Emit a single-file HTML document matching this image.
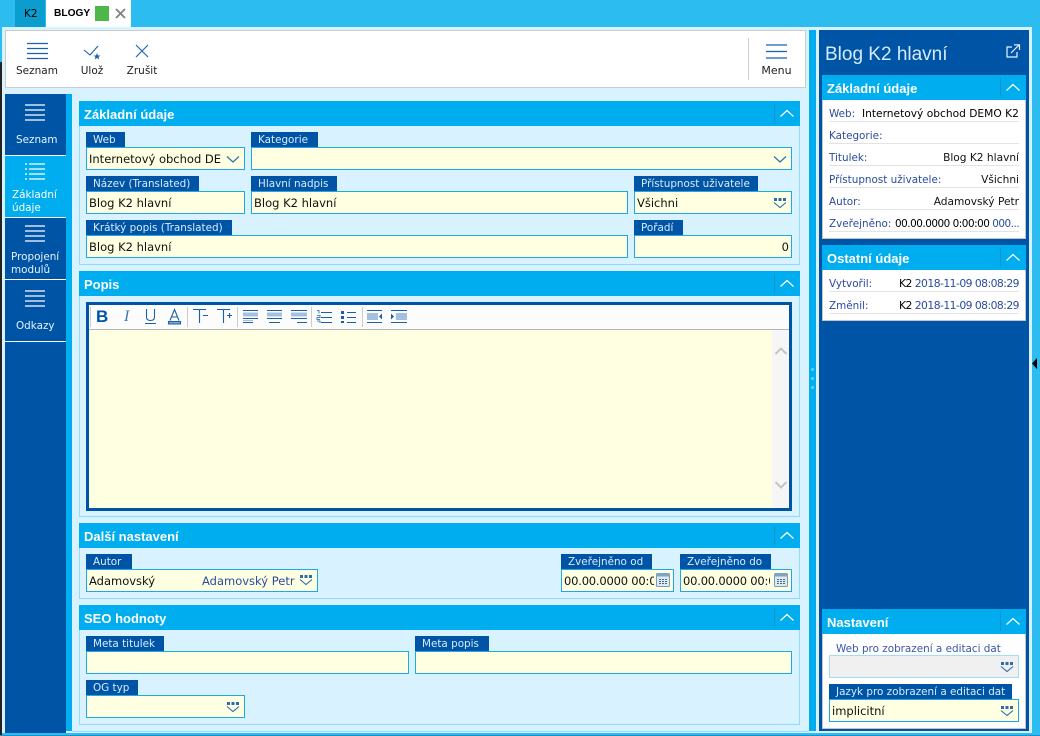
<!DOCTYPE html>
<html><head><meta charset="utf-8"><style>
html,body{margin:0;padding:0}
body{width:1040px;height:736px;overflow:hidden;position:relative;background:#2dbcef;font-family:"DejaVu Sans",sans-serif;font-size:11px;color:#000}
div,span,svg{position:absolute;box-sizing:border-box}
.t{white-space:nowrap;line-height:16px}
.h{background:#00aeef;color:#fff;font:bold 13px/27px "Liberation Sans",sans-serif;height:25px;padding-left:5px}
.h:before{content:"";position:absolute;right:25px;top:3px;bottom:3px;width:1px;background:#1a8fc8}
.h svg{right:5px;top:7px}
.b{background:#d9f2ff;border:1px solid #8fdcff;border-top:0}
.l{background:#0054a6;color:#d8ecfb;height:15px;line-height:17px;padding-left:7px;white-space:nowrap;font-size:10.4px;overflow:hidden}
.i{background:#ffffe1;border:1px solid #1ba9e8;height:23px;line-height:22px;padding-left:2px;white-space:nowrap;overflow:hidden;font-size:11.5px;color:#111}
.n{left:5px;width:61px;height:61px;background:#0054a6;color:#e6f3fc;border-bottom:1px solid #fff;font-size:10.4px}
.n .t{line-height:13px}
.n svg{left:20px}
.r{left:829px;width:190px;height:1px;background:#e3e3e3}
.k{left:829px;color:#2b4ba0;font-size:10.4px}
.v{right:21px;color:#111;font-size:10.6px;text-align:right}
.tb{top:63px;color:#222;font-size:10.5px;text-align:center}
.num{letter-spacing:-.55px;font-size:10.8px}
</style></head><body>
<svg width="0" height="0" style="position:absolute"><defs>
<symbol id="up" viewBox="0 0 16 10"><path d="M1.500 8.500 8 2.500l6.500 6" fill="none" stroke="#fff" stroke-width="1.200"/></symbol>
<symbol id="dn" viewBox="0 0 16 10"><path d="M2 2.500 8 8l6-5.500" fill="none" stroke="#2a73b5" stroke-width="1.200"/></symbol>
<symbol id="dd" viewBox="0 0 14 12"><path d="M1 1h3v3H1zM5.500 1h3v3h-3zM10 1h3v3h-3z" fill="#2a6cb0"/><path d="M1 5.500 7 10.500l6-5" fill="none" stroke="#2a6cb0" stroke-width="1.100"/></symbol>
<symbol id="nv" viewBox="0 0 20 17"><path d="M0 1h20M0 6h20M0 11h20M0 16h20" stroke="#fff" stroke-width="1.300"/></symbol>
<symbol id="cal" viewBox="0 0 14 14"><rect x=".5" y=".5" width="13" height="13" rx="1" fill="#dfe9f2" stroke="#7a9cbc"/><rect x=".5" y=".5" width="13" height="3" fill="#7ea4c8"/><path d="M3 6h2v1H3zM6 6h2v1H6zM9 6h2v1H9zM3 8h2v1H3zM6 8h2v1H6zM9 8h2v1H9zM3 10h2v1H3zM6 10h2v1H6zM9 10h2v1H9z" fill="#44688c"/></symbol>
</defs></svg>

<!-- tabs -->
<div style="left:0;top:62px;width:2px;height:674px;background:#222"></div>
<div style="left:15px;top:0;width:30px;height:27px;background:#0a9dcd"></div>
<div class="t" style="left:24px;top:6px;font-size:10.500px">K2</div>
<div style="left:46px;top:0;width:85px;height:27px;background:#fff"></div>
<div class="t" style="left:54px;top:6px;font:bold 10.200px/16px 'Liberation Sans',sans-serif">BLOGY</div>
<div style="left:95px;top:6px;width:14px;height:15px;background:#4db848"></div>
<svg style="left:115px;top:8px" width="11" height="11"><path d="M1 1l9 9M10 1l-9 9" stroke="#808080" stroke-width="1.800"/></svg>

<!-- main area -->
<div style="left:2px;top:27px;width:1030px;height:706px;background:#d9f2ff"></div>
<div style="left:5px;top:30px;width:801px;height:58px;background:#fff;border:1px solid #ccc"></div>

<!-- toolbar -->
<svg style="left:27px;top:42px" width="21" height="18"><path d="M0 1.500h21M0 6.500h21M0 11.500h21M0 16.500h21" stroke="#1b62ad" stroke-width="1.300"/></svg>
<div class="t tb" style="left:7px;width:60px">Seznam</div>
<svg style="left:83px;top:44px" width="18" height="16"><path d="M1 6l6 5 8-9" fill="none" stroke="#1b62ad" stroke-width="1.100"/><path d="M14 9l1 2.500h2.500l-2 1.500.8 2.500-2.300-1.500-2.300 1.500.8-2.500-2-1.500H13z" fill="#1b62ad"/></svg>
<div class="t tb" style="left:72px;width:40px">Ulož</div>
<svg style="left:135px;top:44px" width="14" height="14"><path d="M1 1l12 12M13 1L1 13" stroke="#1b62ad" stroke-width="1.100"/></svg>
<div class="t tb" style="left:122px;width:40px">Zrušit</div>
<div style="left:748px;top:38px;width:1px;height:42px;background:#ccc"></div>
<svg style="left:766px;top:44px" width="21" height="15"><path d="M0 1h21M0 7.500h21M0 14h21" stroke="#1b62ad" stroke-width="1.300"/></svg>
<div class="t tb" style="left:756px;width:41px;font-size:11px">Menu</div>

<!-- left nav -->
<div style="left:5px;top:94px;width:61px;height:639px;background:#0054a6"></div>
<div style="left:66px;top:94px;width:6px;height:637px;background:#00aeef"></div>
<div class="n" style="top:94px;height:62px"><svg style="top:10px" width="20" height="17"><use href="#nv"/></svg><div class="t" style="left:11px;top:40px">Seznam</div></div>
<div class="n" style="top:156px;background:#00aeef;height:62px;color:#fff"><svg style="top:7px" width="20" height="17"><path d="M0 1h2M0 6h2M0 11h2M0 16h2M4 1h16M4 6h16M4 11h16M4 16h16" stroke="#fff" stroke-width="1.300"/></svg><div class="t" style="left:7px;top:33px">Základní<br>údaje</div></div>
<div class="n" style="top:218px;height:62px"><svg style="top:7px" width="20" height="17"><use href="#nv"/></svg><div class="t" style="left:6px;top:33px">Propojení<br>modulů</div></div>
<div class="n" style="top:280px;height:62px"><svg style="top:10px" width="20" height="17"><use href="#nv"/></svg><div class="t" style="left:11px;top:40px">Odkazy</div></div>

<!-- Section 1 -->
<div class="b" style="left:79px;top:101px;width:721px;height:164px"></div>
<div class="h" style="left:79px;top:101px;width:721px">Základní údaje<svg width="16" height="10"><use href="#up"/></svg></div>
<div class="l" style="left:86px;top:132px;width:39px">Web</div>
<div class="i" style="left:86px;top:147px;width:159px">Internetový obchod DE<svg style="right:3px;top:6px" width="16" height="10"><use href="#dn"/></svg></div>
<div class="l" style="left:251px;top:132px;width:67px">Kategorie</div>
<div class="i" style="left:251px;top:147px;width:541px"><svg style="right:3px;top:6px" width="16" height="10"><use href="#dn"/></svg></div>
<div class="l" style="left:86px;top:176px;width:113px">Název (Translated)</div>
<div class="i" style="left:86px;top:191px;width:159px">Blog K2 hlavní</div>
<div class="l" style="left:251px;top:176px;width:86px">Hlavní nadpis</div>
<div class="i" style="left:251px;top:191px;width:377px">Blog K2 hlavní</div>
<div class="l" style="left:634px;top:176px;width:124px">Přístupnost uživatele</div>
<div class="i" style="left:634px;top:191px;width:158px">Všichni<svg style="right:4px;top:5px" width="14" height="12"><use href="#dd"/></svg></div>
<div class="l" style="left:86px;top:220px;width:146px">Krátký popis (Translated)</div>
<div class="i" style="left:86px;top:235px;width:542px">Blog K2 hlavní</div>
<div class="l" style="left:634px;top:220px;width:49px">Pořadí</div>
<div class="i" style="left:634px;top:235px;width:158px;text-align:right;padding-right:2px">0</div>

<!-- Section 2 -->
<div class="b" style="left:79px;top:271px;width:721px;height:246px"></div>
<div class="h" style="left:79px;top:271px;width:721px">Popis<svg width="16" height="10"><use href="#up"/></svg></div>
<div style="left:86px;top:302px;width:706px;height:209px;border:3px solid #0054a6;background:#ffffe1"></div>
<div style="left:89px;top:305px;width:700px;height:25px;background:#fcfcfc;border-bottom:1px solid #b5b5b5"></div>
<div style="left:772px;top:330px;width:17px;height:178px;background:#f6f6f6"></div>
<svg style="left:774px;top:346px" width="14" height="10"><path d="M1.500 8 7 2.500 12.500 8" fill="none" stroke="#c4c4c4" stroke-width="2"/></svg>
<svg style="left:774px;top:480px" width="14" height="10"><path d="M1.500 2 7 7.500 12.500 2" fill="none" stroke="#c4c4c4" stroke-width="2"/></svg>
<!-- editor toolbar -->
<div style="left:90px;top:307px;width:1px;height:20px;background:#ccc"></div>
<div style="left:187px;top:307px;width:1px;height:20px;background:#ccc"></div>
<div style="left:237px;top:307px;width:1px;height:20px;background:#ccc"></div>
<div style="left:311px;top:307px;width:1px;height:20px;background:#ccc"></div>
<div style="left:362px;top:307px;width:1px;height:20px;background:#ccc"></div>
<div class="t" style="left:96px;top:307px;font:bold 17px/19px 'Liberation Sans',sans-serif;color:#0054a6">B</div>
<div class="t" style="left:124px;top:308px;font:italic 16px/18px 'Liberation Serif',serif;color:#3a78b8">I</div>
<svg style="left:145px;top:308px" width="170" height="18" fill="none" stroke="#1b5fa8" stroke-width="1.100">
<path d="M1.500 1v8q0 3.500 4 3.500t4-3.500V1M0 15.500h11"/>
<path d="M25 12.500 29.500 1.500l4.500 11M26.500 9h6"/><path d="M23.500 13.500h12v2.500h-12z" fill="#7ea6d0"/>
<path d="M48 1.500h13M54.500 1.500V15M58 7.500h5"/>
<path d="M72 1.500h13M78.500 1.500V15M82 7.500h5M84.500 5v5"/>
</svg>
<svg style="left:243px;top:310px" width="170" height="13" fill="none" stroke="#1b5fa8">
<path d="M0 .5h15M0 8.500h15M0 12.500h10"/><path d="M0 2.500h15v4H0z" stroke="none" fill="#a4c0de"/><path d="M0 10.500h10" stroke="#a4c0de"/>
<path d="M24 .5h15M24 8.500h15M26 12.500h11"/><path d="M24 2.500h15v4H24z" stroke="none" fill="#a4c0de"/>
<path d="M48 .5h16M48 8.500h16M54 12.500h10"/><path d="M48 2.500h16v4H48z" stroke="none" fill="#a4c0de"/>
<path d="M78 2.500h11M78 7.500h11M78 12.500h11"/><path d="M74 .5h2v3M74 5.500h3v2h-3v2h3M74 11h3v3h-3" stroke-width=".8"/>
<path d="M104 2.500h9M104 7.500h9M104 12.500h9" stroke-width="1.100"/><path d="M98 1h3v3h-3zM98 6h3v3h-3zM98 11h3v3h-3z" fill="#1b5fa8" stroke="none"/>
<path d="M124 .5h15M124 12.500h15"/><path d="M124 3h11v7h-11z" stroke="none" fill="#a4c0de"/><path d="M139 3.500v6l-3-3z" fill="#1b5fa8" stroke="none"/>
<path d="M148 .5h16M148 12.500h16"/><path d="M153 3h11v7h-11z" stroke="none" fill="#a4c0de"/><path d="M148 3.500v6l3-3z" fill="#1b5fa8" stroke="none"/>
</svg>

<!-- Section 3 -->
<div class="b" style="left:79px;top:523px;width:721px;height:76px"></div>
<div class="h" style="left:79px;top:523px;width:721px">Další nastavení<svg width="16" height="10"><use href="#up"/></svg></div>
<div class="l" style="left:86px;top:554px;width:46px">Autor</div>
<div class="i" style="left:86px;top:569px;width:232px">Adamovský<span style="left:115px;top:0;color:#2b4ba0">Adamovský Petr</span><svg style="right:4px;top:4px" width="14" height="12"><use href="#dd"/></svg></div>
<div class="l" style="left:561px;top:554px;width:91px">Zveřejněno od</div>
<div class="i" style="left:561px;top:569px;width:113px"><span style="left:2px;top:0;width:90px;overflow:hidden;letter-spacing:-.2px">00.00.0000 00:00</span><svg style="right:3px;top:3px" width="14" height="14"><use href="#cal"/></svg></div>
<div class="l" style="left:680px;top:554px;width:91px">Zveřejněno do</div>
<div class="i" style="left:680px;top:569px;width:112px"><span style="left:2px;top:0;width:87px;overflow:hidden;letter-spacing:-.2px">00.00.0000 00:00</span><svg style="right:3px;top:3px" width="14" height="14"><use href="#cal"/></svg></div>

<!-- Section 4 -->
<div class="b" style="left:79px;top:605px;width:721px;height:120px"></div>
<div class="h" style="left:79px;top:605px;width:721px">SEO hodnoty<svg width="16" height="10"><use href="#up"/></svg></div>
<div class="l" style="left:86px;top:636px;width:78px">Meta titulek</div>
<div class="i" style="left:86px;top:651px;width:323px"></div>
<div class="l" style="left:415px;top:636px;width:74px">Meta popis</div>
<div class="i" style="left:415px;top:651px;width:377px"></div>
<div class="l" style="left:86px;top:680px;width:52px">OG typ</div>
<div class="i" style="left:86px;top:695px;width:159px"><svg style="right:4px;top:5px" width="14" height="12"><use href="#dd"/></svg></div>

<!-- Splitter -->
<div style="left:809px;top:30px;width:7px;height:701px;background:#00aeef"></div>
<div style="left:811px;top:368px;width:3px;height:3px;border-radius:2px;background:#5fd0fa"></div>
<div style="left:811px;top:377px;width:3px;height:3px;border-radius:2px;background:#5fd0fa"></div>
<div style="left:811px;top:386px;width:3px;height:3px;border-radius:2px;background:#5fd0fa"></div>

<!-- Right panel -->
<div style="left:819px;top:30px;width:210px;height:701px;background:#0054a6"></div>
<div style="left:1032px;top:27px;width:8px;height:709px;background:#2dbcef"></div>
<svg style="left:1032px;top:358px" width="6" height="11"><path d="M5 0v11L0 5.500z" fill="#000"/></svg>
<div class="t" style="left:825px;top:43px;font:19px/24px 'Liberation Sans',sans-serif;color:#d4ebfb">Blog K2 hlavní</div>
<svg style="left:1006px;top:44px" width="15" height="14" fill="none" stroke="#e6f3fc" stroke-width="1.200"><path d="M6 3H1v10h10V8"/><path d="M5 9l8-8M8 .8h5.500V6"/></svg>

<div style="left:822px;top:75px;width:204px;height:164px;background:#fff;border:1px solid #c4c4c4"></div>
<div class="h" style="left:822px;top:75px;width:204px">Základní údaje<svg width="16" height="10"><use href="#up"/></svg></div>
<div class="t k" style="top:106px">Web:</div><div class="t" style="left:862px;top:106px;font-size:10.650px">Internetový obchod DEMO K2</div><div class="r" style="top:121px"></div>
<div class="t k" style="top:128px">Kategorie:</div><div class="r" style="top:143px"></div>
<div class="t k" style="top:150px">Titulek:</div><div class="t v" style="top:150px">Blog K2 hlavní</div><div class="r" style="top:165px"></div>
<div class="t k" style="top:172px">Přístupnost uživatele:</div><div class="t v" style="top:172px">Všichni</div><div class="r" style="top:187px"></div>
<div class="t k" style="top:194px">Autor:</div><div class="t v" style="top:194px">Adamovský Petr</div><div class="r" style="top:209px"></div>
<div class="t k" style="top:216px">Zveřejněno:</div><div class="t" style="left:895px;top:216px;font-size:10.400px;letter-spacing:-.47px">00.00.0000 0:00:00 <span style="position:static;color:#2b4ba0">000...</span></div><div class="r" style="top:231px"></div>

<div style="left:822px;top:245px;width:204px;height:76px;background:#fff;border:1px solid #c4c4c4"></div>
<div class="h" style="left:822px;top:245px;width:204px">Ostatní údaje<svg width="16" height="10"><use href="#up"/></svg></div>
<div class="t k" style="top:276px">Vytvořil:</div><div class="t num" style="left:899px;top:276px">K2 <span style="position:static;color:#2b4ba0">2018-11-09 08:08:29</span></div><div class="r" style="top:291px"></div>
<div class="t k" style="top:298px">Změnil:</div><div class="t num" style="left:899px;top:298px">K2 <span style="position:static;color:#2b4ba0">2018-11-09 08:08:29</span></div><div class="r" style="top:313px"></div>

<div style="left:822px;top:609px;width:204px;height:120px;background:#fff;border:1px solid #c4c4c4"></div>
<div class="h" style="left:822px;top:609px;width:204px">Nastavení<svg width="16" height="10"><use href="#up"/></svg></div>
<div class="t" style="left:836px;top:641px;color:#3a55a8;font-size:10.400px">Web pro zobrazení a editaci dat</div>
<div class="i" style="left:829px;top:655px;width:190px;background:#f0f0f0;border-color:#a4dcf8"><svg style="right:4px;top:5px" width="14" height="12"><use href="#dd"/></svg></div>
<div class="l" style="left:829px;top:684px;width:183px">Jazyk pro zobrazení a editaci dat</div>
<div class="i" style="left:829px;top:699px;width:190px">implicitní<svg style="right:4px;top:5px" width="14" height="12"><use href="#dd"/></svg></div>

<div style="left:72px;top:731px;width:737px;height:1px;background:#8fdcff"></div>
<div style="left:0;top:735px;width:1040px;height:1px;background:#1a8fd0"></div>
</body></html>
